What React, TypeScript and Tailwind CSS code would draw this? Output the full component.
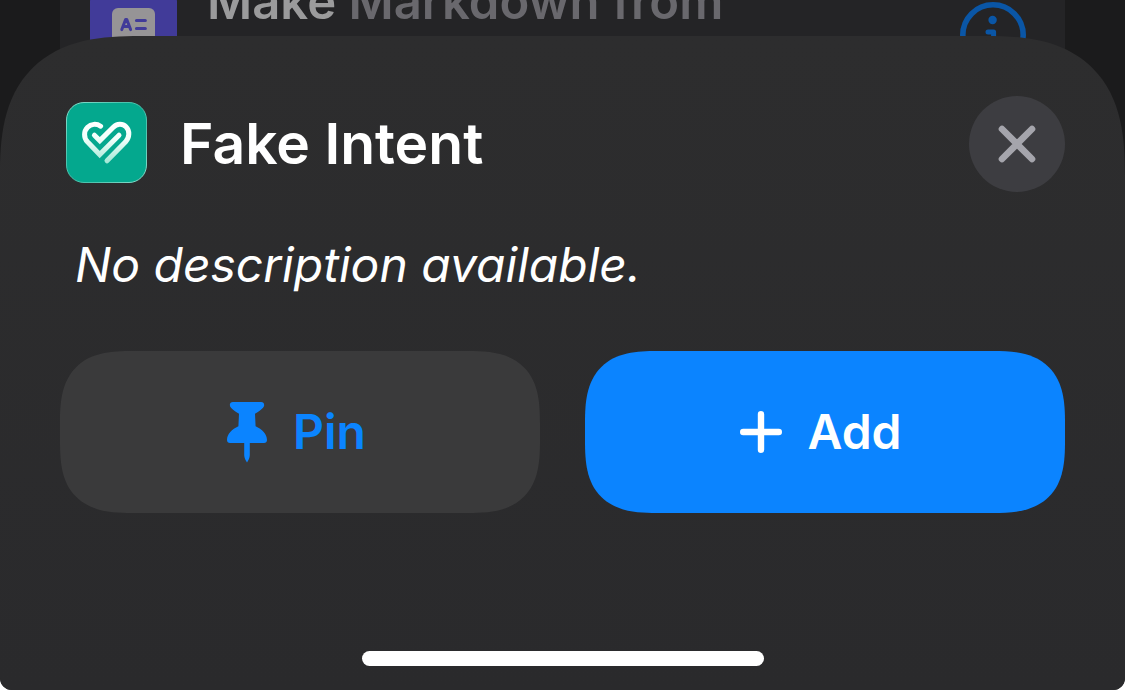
import React from "react";

function ContactCardIcon() {
  return (
    <svg width="43" height="36" viewBox="0 0 43 36" aria-hidden="true">
      <rect x="0" y="0" width="43" height="36" rx="6" fill="#969496" />
      <path
        d="M9.8 21.6L13.6 11.4H14.8L18.6 21.6M11.4 18.4H17"
        fill="none"
        stroke="#413b99"
        strokeWidth="3"
        strokeLinecap="round"
        strokeLinejoin="round"
      />
      <path d="M24.5 12.5H33.3M24.5 20.5H33.3" stroke="#413b99" strokeWidth="3.2" strokeLinecap="round" />
    </svg>
  );
}

function InfoIcon() {
  return (
    <svg width="66" height="66" viewBox="0 0 66 66" fill="none" aria-hidden="true">
      <circle cx="33" cy="33" r="30.2" stroke="#0a56a6" strokeWidth="5.6" />
      <circle cx="32.6" cy="18" r="4.2" fill="#0a56a6" />
      <path
        d="M28 30H33.6V47M27 47.5H40"
        stroke="#0a56a6"
        strokeWidth="5"
        strokeLinecap="round"
        strokeLinejoin="round"
      />
    </svg>
  );
}

function HeartCheckIcon() {
  return (
    <svg width="81" height="81" viewBox="0 0 81 81" fill="none" aria-hidden="true">
      <defs>
        <linearGradient id="heart" x1="0" y1="20" x2="0" y2="62" gradientUnits="userSpaceOnUse">
          <stop offset="0" stopColor="#ffffff" />
          <stop offset="0.4" stopColor="#f2fffb" />
          <stop offset="1" stopColor="#9fe6d4" />
        </linearGradient>
        <linearGradient id="rim" x1="0" y1="0" x2="81" y2="81" gradientUnits="userSpaceOnUse">
          <stop offset="0" stopColor="#8fe0cf" />
          <stop offset="0.35" stopColor="#4cc3ae" />
          <stop offset="0.65" stopColor="#4cc3ae" />
          <stop offset="1" stopColor="#8fe0cf" />
        </linearGradient>
      </defs>
      <rect x="0.5" y="0.5" width="80" height="80" rx="17.5" fill="#04a88e" stroke="url(#rim)" />
      <g stroke="url(#heart)" strokeWidth="5" strokeLinecap="round" strokeLinejoin="miter">
        <path d="M34.6 24.2C30.5 21.4 25 21.8 21.6 25.2C17.6 29.2 17.6 35.6 21.4 39.8L33.7 52.6L53 33.2" />
        <path d="M28.4 33.2L33.8 38.6L47 25.4C51 21.4 56.6 21.4 60 24.8C64 28.8 63.6 35.2 59.6 39.8L41 58.8" />
      </g>
    </svg>
  );
}

function PinIcon() {
  return (
    <svg width="42" height="62" viewBox="0 0 42 62" fill="currentColor" aria-hidden="true">
      <path d="M7 1H35C38.4 1 39.2 4.6 36.8 7C34.2 9.5 31.8 11.2 29 12.8L29.6 25.2C36 28 41 33 41 39C41 41 39.8 42 38 42H4C2.2 42 1 41 1 39C1 33 6 28 12.4 25.2L13 12.8C10.2 11.2 7.8 9.5 5.2 7C2.8 4.6 3.6 1 7 1Z" />
      <path d="M18.2 41H23.8V54C23.8 56.6 22.4 59.6 21 61.4C19.6 59.6 18.2 56.6 18.2 54Z" />
    </svg>
  );
}

function PlusIcon() {
  return (
    <svg width="42" height="42" viewBox="0 0 42 42" aria-hidden="true">
      <path d="M21 3.2V38.8M3.2 21H38.8" stroke="currentColor" strokeWidth="6.4" strokeLinecap="round" />
    </svg>
  );
}

function CloseIcon() {
  return (
    <svg width="38" height="38" viewBox="0 0 38 38" aria-hidden="true">
      <path d="M4 4L34 34M34 4L4 34" stroke="currentColor" strokeWidth="6.6" strokeLinecap="round" />
    </svg>
  );
}

const actionClass =
  "flex h-[162px] items-center justify-center gap-[25px] rounded-[72px] pr-[8px] text-[48px] font-semibold leading-none [corner-shape:superellipse(1.45)]";

export default function App() {
  return (
    <div className="bg-white font-['Inter','Liberation_Sans',sans-serif]">
      <div className="flex min-h-screen flex-col overflow-hidden rounded-b-[12px] bg-[#1b1b1c]">
        <div className="mx-[60px] flex h-[160px] items-start bg-[#242426] pl-[30px] pr-[39px]">
          <div className="-mt-[18px] flex h-[87px] w-[87px] shrink-0 items-center justify-center rounded-[20px] bg-[#413b99]">
            <ContactCardIcon />
          </div>
          <p className="-mt-[28px] ml-[30px] flex-1 text-[49px] font-semibold leading-[60px] text-[#69686d]">
            <span className="text-[#9b9b9c]">Make</span> Markdown from
          </p>
          <button type="button" aria-label="Info" className="mt-[2px]">
            <InfoIcon />
          </button>
        </div>

        <section
          aria-labelledby="sheet-title"
          className="relative -mt-[124px] flex flex-1 flex-col rounded-t-[140px] bg-linear-to-b from-[#2d2d2e] to-[#2a2a2c] px-[60px] pb-[24px] pt-[60px] text-white [corner-shape:superellipse(1.4)]"
        >
          <header className="flex items-start">
            <div className="flex flex-1 items-start gap-[33px] pl-[6px] pt-[6px]">
              <HeartCheckIcon />
              <h1 id="sheet-title" className="text-[57px] font-semibold leading-[84px]">
                Fake Intent
              </h1>
            </div>
            <button
              type="button"
              aria-label="Close"
              className="flex h-[96px] w-[96px] items-center justify-center rounded-full bg-[#3d3d41] text-[#a5a5ac]"
            >
              <CloseIcon />
            </button>
          </header>

          <p className="mt-[43px] pl-[15px] text-[48px] italic leading-[60px]">No description available.</p>

          <div className="mt-[56px] grid grid-cols-2 gap-[45px]">
            <button type="button" className={`${actionClass} bg-[#3a3a3b] text-[#0b84ff]`}>
              <PinIcon />
              Pin
            </button>
            <button type="button" className={`${actionClass} bg-[#0b84ff] text-white`}>
              <PlusIcon />
              Add
            </button>
          </div>

          <div className="mx-auto mt-auto h-[15px] w-[402px] rounded-full bg-white" />
        </section>
      </div>
    </div>
  );
}
